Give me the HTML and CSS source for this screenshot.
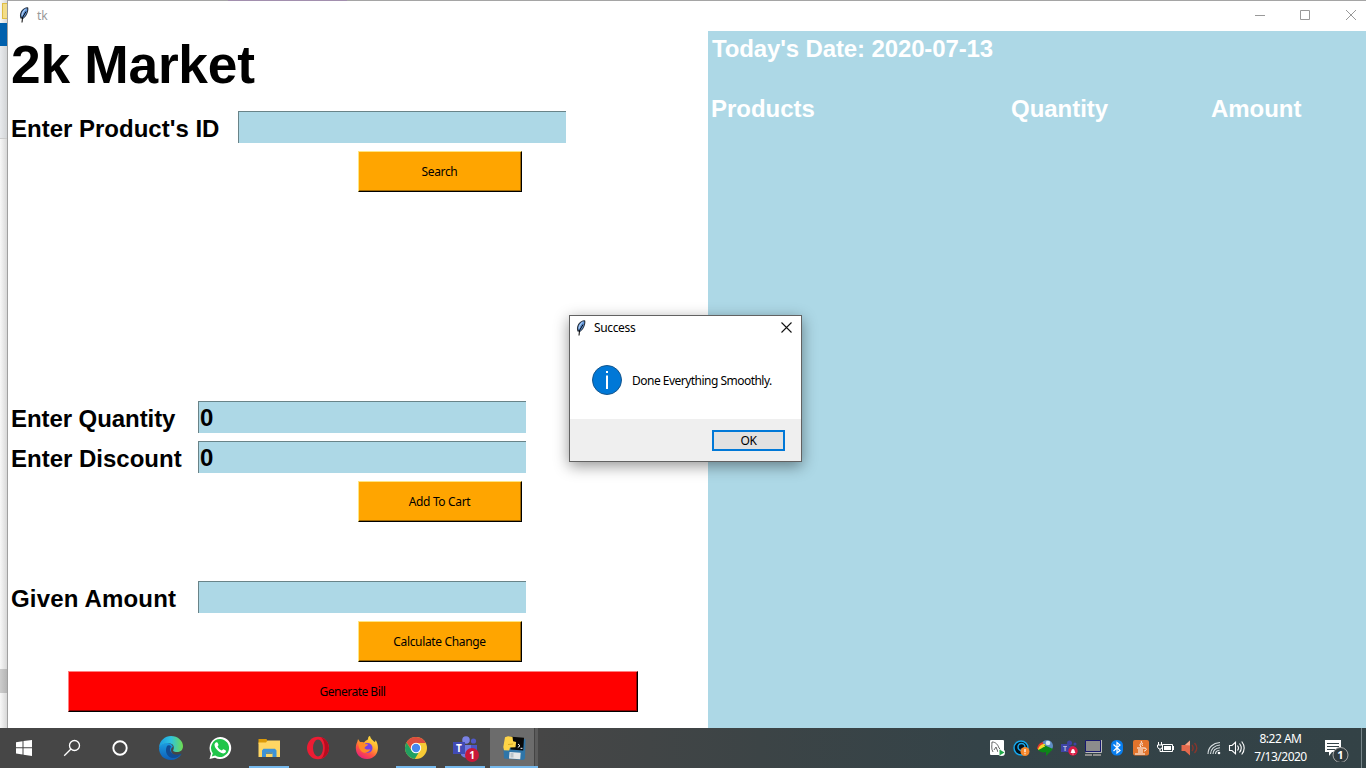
FILE: index.html
```html
<!DOCTYPE html>
<html lang="en">
<head>
<meta charset="utf-8">
<title>tk</title>
<link rel="stylesheet" href="styles.css">
</head>
<body>
<svg class="defs" aria-hidden="true">
  <defs>
    <symbol id="feather" viewBox="0 0 10 16">
      <path d="M1.500 11.500C0 7 2 3 5.300 1.200 7 0 9.500 0 9.300 1c.5 4-1.900 8.500-5 10.800z" fill="#28323f"/>
      <path d="M2.500 10C1.500 7 3.200 3.200 6 1.800c1.300-.8 2.300-.7 2.300.4C8 6 6.500 8.800 4.200 10.800z" fill="#6297dc"/>
      <path d="M3 8.500C3.300 6 4.500 3.600 6.600 2.200" stroke="#c4dcf8" fill="none"/>
      <path d="M3 15.500 3.500 10.500 7 4.500" stroke="#000" fill="none"/>
    </symbol>
  </defs>
</svg>
<div class="desktop">
  <div class="behind">
    <i class="behind-folder"></i><i class="behind-blue"></i><i class="behind-panel"></i><i class="behind-list"></i><i class="behind-thumb"></i><i class="behind-rest"></i>
  </div>
  <main class="window">
    <header class="titlebar">
      <svg class="feather"><use href="#feather"/></svg>
      <span class="titlebar-name">tk</span>
      <svg class="controls" width="102" height="12" viewBox="0 0 102 12" fill="none" stroke="#999"><path d="M0 6.500h10"/><path d="M45.500 1.500h9v9h-9zM91 1l10 10M101 1 91 11"/></svg>
    </header>
    <div class="content">
      <section class="form">
        <h1 class="heading">2k Market</h1>
        <div class="row"><label class="label label-wide">Enter Product's ID</label><div class="entry"></div></div>
        <div class="button">Search</div>
        <div class="row row-quantity"><label class="label">Enter Quantity</label><div class="entry">0</div></div>
        <div class="row row-discount"><label class="label discount">Enter Discount</label><div class="entry">0</div></div>
        <div class="button">Add To Cart</div>
        <div class="row row-amount"><label class="label label-amount">Given Amount</label><div class="entry"></div></div>
        <div class="button">Calculate Change</div>
        <div class="button button-bill">Generate Bill</div>
      </section>
      <section class="bill">
        <div class="date">Today's Date: 2020-07-13</div>
        <div class="columns"><span>Products</span><span>Quantity</span><span>Amount</span></div>
      </section>
    </div>
  </main>
</div>

<footer class="taskbar">
  <nav class="apps">
    <div class="app app-system"><svg class="icon" viewBox="0 0 24 24"><path fill="#fff" d="M4 6.200 10.500 5.200V11.300H4zM11.500 5.100 20 4v7.300h-8.500zM4 12.300h6.500v6.200L4 17.600zM11.500 12.300H20V20l-8.500-1.200z"/></svg></div>
    <div class="app app-system"><svg class="icon" viewBox="0 0 24 24" fill="none" stroke="#fff" stroke-width="1.300"><circle cx="14.500" cy="9.500" r="5"/><path d="M11 13 4.200 19.800"/></svg></div>
    <div class="app app-system"><svg class="icon" viewBox="0 0 24 24"><circle cx="12" cy="12" r="6.700" fill="none" stroke="#fff" stroke-width="1.900"/></svg></div>
    <div class="app app-first">
      <svg class="icon" viewBox="0 0 24 24">
        <defs>
          <linearGradient id="edge-top" x1="0" x2="1" y1=".3" y2=".3"><stop offset="0" stop-color="#1b9de2"/><stop offset=".5" stop-color="#2fc3df"/><stop offset="1" stop-color="#6fdd4e"/></linearGradient>
          <linearGradient id="edge-left" x1="0" x2="0" y1="0" y2="1"><stop offset="0" stop-color="#1b9ce0"/><stop offset="1" stop-color="#0d5eb8"/></linearGradient>
        </defs>
        <path fill="url(#edge-left)" d="M0 12C2 6 13 5 14 11c-3 1-3 7 3 8.500 2 .5 4-.5 5.500-1.500C20 22 16 24 12 24 5 24 0 19 0 12z"/>
        <path fill="url(#edge-top)" d="M0 11.500C.5 4.500 6 0 12 0c7 0 12 5 12 10 0 4.500-3 6-6 6-3.500 0-4.500-1.200-3.500-2.500C16.500 8 10 6 6 7.500 3 8.500 1 10 0 11.500z"/>
        <path fill="#114c94" d="M8 10c-3 6 1 12 6 12 4 0 7-2 8.500-4.500-4 2-9 1.500-11-2C10.500 13.500 11 12 12 10.800 11 9 9 9 8 10z"/>
      </svg>
    </div>
    <div class="app"><svg class="icon" viewBox="0 0 24 24"><path fill="#fff" d="M12 1a11 11 0 1 1-5 20.700L1.500 23 3 17.500A11 11 0 0 1 12 1z"/><path fill="#20c54a" d="M12 3a9 9 0 1 1-4.800 16.600l-3.400 1 1-3.300A9 9 0 0 1 12 3z"/><path fill="#fff" d="M8 6.500c1-.6 1.500-.3 2 1l.5 1.300c.2.700-.8 1.300-1 1.800.8 1.800 2.300 3.300 4.200 4 .7-.4 1.200-1.600 1.900-1.300l2.200 1.100c.7.600-.3 3-2.600 3C11 17 6.500 12 6.500 8.800c0-1 .7-2 1.500-2.300z"/></svg></div>
    <div class="app app-open"><svg class="icon" viewBox="0 0 24 24"><path fill="#dc9a08" d="M1.500 3h8l1 2v3h-9z"/><path fill="#ffd663" d="M1.500 6.500H9l1.500-2H23V21H1.500z"/><path fill="#3d93d8" d="M5 21v-6.500l1.500-1.700h11.500l1.500 1.700V21h-4v-4.500H9V21z"/><path fill="#1d6fb4" d="M9 16.500h6.500v1.200H9z"/></svg></div>
    <div class="app"><svg class="icon" viewBox="0 0 24 24"><ellipse cx="12" cy="12" rx="11" ry="11.300" fill="#ed1c33"/><path fill="#b70c20" d="M15 1.200A11.300 11.300 0 0 1 15 22.800c5-4 5-17.500 0-21.600z"/><ellipse cx="12" cy="12" rx="5" ry="8.500" fill="#484848"/></svg></div>
    <div class="app">
      <svg class="icon" viewBox="0 0 24 24">
        <defs><linearGradient id="fox" x1=".9" x2=".3" y1="0" y2="1"><stop offset="0" stop-color="#fff04a"/><stop offset=".4" stop-color="#ffb02e"/><stop offset=".7" stop-color="#ff5340"/><stop offset="1" stop-color="#e6217c"/></linearGradient></defs>
        <path fill="url(#fox)" d="M3 3l2 3 4 .500C11 4 13 4 13 3c0-2 1-3 2-3 .5 3 3 4 4.500 6 1-.5 1-1 1-2 5 7 2.500 19-8.500 19C3 23 0 16 1 9.500 1.500 7 2.500 6 3 3z"/>
        <circle cx="12.500" cy="12" r="5" fill="#7542e5"/>
        <path fill="#ff8a25" d="M3.500 7c3-2 5-.5 6 1l3.500.3c0 1.500-3 2-3.500 4 2 2 4 1 6 1-2 4-7 5-10 1-2-2.500-2-5-2-7.300z"/>
      </svg>
    </div>
    <div class="app app-open"><svg class="icon" viewBox="0 0 24 24"><circle cx="12" cy="12" r="11" fill="#f7ca35"/><path fill="#dc4d3e" d="M2.500 6.500A11 11 0 0 1 21.700 7H12a5 5 0 0 0-4.400 7z"/><path fill="#21a061" d="M2.500 6.500 7.700 14.500A5 5 0 0 0 15 16l-4.200 7A11 11 0 0 1 2.500 6.500z"/><circle cx="12" cy="12" r="5.200" fill="#fff"/><circle cx="12" cy="12" r="4.200" fill="#4688ed"/></svg></div>
    <div class="app app-open"><svg class="icon" viewBox="0 0 24 24"><circle cx="13" cy="4" r="3.800" fill="#7a82e6"/><circle cx="20.500" cy="5" r="2.600" fill="#5059c9"/><path fill="#7079df" d="M8 9h10v10a6 6 0 0 1-10 0z"/><path fill="#4c55c4" d="M18 9h6v7a4 4 0 0 1-6 3z"/><path fill="#414bb5" d="M0 6h12v12H0z"/><text class="glyph" x="3" y="15.500" font-size="10">T</text></svg><b class="badge">1</b></div>
    <div class="app app-open app-active"><svg class="icon" viewBox="0 0 24 24"><path fill="#2f75a8" d="M21 3l2.500.3L23 22.500 21.500 24 2 22.500 1.500 13z"/><path fill="#080808" d="M9.500 .7 22 1.700 21.200 14.600 8.500 13.600z"/><path fill="#e5e7e8" d="M7.500 16 18.700 16.700 18.200 23.200 7 22.500z"/><path fill="#b9c3ca" d="M8.500 17h3v4.500h-3z"/><path d="m16 8 2 1.800L15.800 11.500m2.700.8h2" stroke="#fff" fill="none"/><path fill="#ffd447" d="M3 1.200 6 .2 10.500 1l.6 4.300 3 .7-.6 5.200-5.500.3-.8 3L2 14.200 1.300 11z"/><path d="M6 8.500 11 8" stroke="#dca923" fill="none"/></svg></div>
  </nav>
  <div class="tray">
    <svg class="tray-icon" viewBox="0 0 24 24"><rect x="5" y="4" width="14" height="15" rx="1" fill="#fff"/><path d="M8 16c-2-3-1-7-1-10 4 0 6 3 7 6l3 3m-8-1 2-3 2 5" fill="none" stroke="#666"/><circle cx="16.500" cy="16.500" r="3.500" fill="#fff"/><path fill="#22a84a" d="m14.500 13.500 5 3-5 3z"/></svg>
    <svg class="tray-icon" viewBox="0 0 24 24"><circle cx="12" cy="12" r="7.500" fill="#06141d"/><g fill="none" stroke="#17a8ed" stroke-width="1.500"><circle cx="12" cy="12" r="7"/><circle cx="12.500" cy="11" r="3.500"/></g><circle cx="16" cy="15.500" r="4.500" fill="#f7882b"/><path d="M16 13v3.200m0 1v1" stroke="#fff" stroke-width="1.300"/></svg>
    <svg class="tray-icon" viewBox="0 0 24 24"><circle cx="14" cy="10" r="6" fill="#5f8dc4"/><circle cx="15" cy="7" r="2.300" fill="#d2e4f4"/><path fill="#e2372b" d="M4 13c1-5 3-6 6-7l1 8z"/><path fill="#f5d82d" d="M5 14c1-5 4-6 7-6l1 7z"/><path fill="#0c8617" d="M5 14c4-1 4-3 7-3l-1-2 9 4-7 7v-4c-3 1-6 0-8-2z"/></svg>
    <svg class="tray-icon" viewBox="0 0 24 24"><g fill="#3e44a5"><circle cx="12.500" cy="7" r="2.500"/><circle cx="18" cy="8" r="1.500"/><path d="M9 10h8v7h-5zM4 8h8v8H4z"/></g><text class="glyph" x="6" y="14.500" font-size="7" opacity=".6">T</text><circle cx="16" cy="15" r="4.700" fill="#d91e45"/><path fill="#fff" d="M13.500 17c1-1 .5-4 2.500-4s1.500 3 2.500 4zm2 .5h1v1h-1z"/></svg>
    <svg class="tray-icon" viewBox="0 0 24 24"><path fill="#8c8c8c" stroke="#171970" d="M4.500 4.500h15v11h-15z"/><path d="M4.500 16.500h16V4" fill="none" stroke="#bbb"/><path fill="#8c8c8c" d="M4 18h7v2H4zm8 0h8v2h-8z"/></svg>
    <svg class="tray-icon" viewBox="0 0 24 24"><rect x="6" y="4" width="12" height="15.500" rx="5.500" fill="#087eef"/><path d="m8.500 8.500 6.500 6-3 2.500V6.500l3 2.500-6.500 6" fill="none" stroke="#fff" stroke-width="1.200"/></svg>
    <svg class="tray-icon" viewBox="0 0 24 24"><rect x="4" y="4" width="16" height="15.500" rx="2" fill="#e3742c"/><path d="M12 5c2 2-3 3 0 6m2-4c-2 1-1 2 0 3M8 12h7c4 0 2 3 0 3M9 14h5m-5 2h5m-8 2h10" fill="none" stroke="#fff"/></svg>
    <svg class="tray-icon" viewBox="0 0 24 24"><path d="M9.500 8.500h10v7h-10zM5.500 6v3m3-3v3m-4 0h5v2l-1.500 2h-2l-1.500-2zm2.500 4v2.500h3" fill="none" stroke="#fff"/><path fill="#fff" d="M11 10h7v4h-7zm9 0h1v4h-1z"/></svg>
    <svg class="tray-icon" viewBox="0 0 24 24"><path fill="#e4694c" d="M4.500 9H8l5-4.500v15L8 15H4.500z"/><path fill="#f5a487" d="M8 9l5-4.500v5z"/><path d="M15 9c1.500 2 1.500 4 0 6m2.500-8c3 3 3 7 0 10" fill="none" stroke="#87352c" stroke-width="1.400"/></svg>
    <svg class="tray-icon" viewBox="0 0 24 24" fill="none" stroke="#d8dfe1" stroke-width="1.100"><path d="M7 18C7 11.500 12 7 19 6.500M9.500 18c0-5 4-8.500 9.500-9m-7 9c0-4 3-6 7-6.300M14.500 18c0-2 1.500-3.500 4-3.700"/><circle cx="18" cy="17" r="1.300" fill="#fff" stroke="none"/></svg>
    <svg class="tray-icon" viewBox="0 0 24 24" fill="none" stroke="#fff" stroke-width="1.100"><path d="M4.500 9.500H7l3.500-3.200v11.500L7 14.500H4.500zM12.500 9.500q2 2.500 0 5m2-7q3.500 4.500 0 9m2.200-11q5 6.500 0 13"/></svg>
  </div>
  <div class="clock"><span>8:22 AM</span><span>7/13/2020</span></div>
  <div class="notice"><svg width="26" height="26" viewBox="0 0 26 26"><path fill="#fff" d="M2 4h16v12H9l-3 4v-4H2z"/><path d="M4 7.500h12m-12 3h12m-12 3h9" stroke="#344348"/><circle cx="17.500" cy="19" r="7.500" fill="#303b3f" stroke="#aaa"/><text class="glyph" x="14.300" y="23" font-size="11">1</text></svg></div>
</footer>

<div class="dialog">
  <header class="dialog-title">
    <svg class="feather"><use href="#feather"/></svg>
    <span>Success</span>
    <svg class="dialog-close" width="11" height="11" viewBox="0 0 11 11"><path d="m.5.5 10 10m0-10-10 10" stroke="#111" stroke-width="1.100"/></svg>
  </header>
  <div class="dialog-body">
    <svg width="30" height="30" viewBox="0 0 30 30"><circle cx="15" cy="15" r="14.500" fill="#0078d7" stroke="#15558c"/><path fill="#fff" d="M14 6h2v2h-2zm0 4.500h2V24h-2z"/></svg>
    <span class="message">Done Everything Smoothly.</span>
  </div>
  <div class="dialog-footer"><div class="ok">OK</div></div>
</div>
</body>
</html>
```

FILE: styles.css
```css
* { box-sizing: border-box; }
body {
  margin: 0;
  width: 1366px;
  height: 768px;
  overflow: hidden;
  display: flex;
  flex-direction: column;
  font: 12px/16px "Noto Sans", sans-serif;
  letter-spacing: -.35px;
  color: #000;
  background: #fff;
}
.defs { position: absolute; width: 0; height: 0; }
svg { display: block; flex: none; }
.desktop { display: flex; height: 728px; }

.behind { width: 7px; display: flex; flex-direction: column; background: linear-gradient(90deg, #f8f8f8, #d8d8d8); }
.behind i { display: block; flex: none; }
.behind-folder { height: 16px; margin: 3px 0 4px 2px; background: #f3dd88; border: 1px solid #dfbd45; border-right: 0; }
.behind-blue { height: 23px; background: #0060ad; }
.behind-panel { height: 93px; background: linear-gradient(90deg, #e8eaed, #d2d4d6); border-bottom: 1px solid #ccc; }
.behind-list { height: 530px; }
.behind-thumb { height: 24px; background: linear-gradient(90deg, #cdcdcd, #b5b5b5); }

.window { flex: 1; display: flex; flex-direction: column; border-left: 1px solid #a0a0a0; background: #fff; }
.titlebar {
  height: 31px;
  flex: none;
  display: flex;
  align-items: center;
  padding: 0 9px 2px 11px;
  border-top: 1px solid;
  border-image: linear-gradient(90deg, #a5a5a5 221px, #a28fae 221px 340px, #a5a5a5 340px) 1;
}
.feather { width: 10px; height: 16px; }
.titlebar-name { margin: 1px 0 0 8px; color: #999; font-size: 12px; letter-spacing: 0; }
.controls { margin-left: auto; }
.content { flex: 1; display: flex; }
.form { width: 700px; display: flex; flex-direction: column; font-family: "Liberation Sans", Arial, sans-serif; letter-spacing: 0; }
.heading { height: 80px; margin: 0; padding-left: 3px; font-size: 53.3px; line-height: 67px; letter-spacing: -.25px; white-space: nowrap; }
.row { display: flex; height: 32px; flex: none; }
.label { width: 190px; padding: 4px 0 0 3px; font-size: 24px; font-weight: bold; line-height: 28px; white-space: nowrap; }
.label-wide { width: 230px; }
.label-amount { letter-spacing: .17px; }
.entry { width: 328px; padding-left: 1px; background: #add8e6; border: solid #698388; border-width: 1px 0 0 1px; font-size: 24px; font-weight: bold; line-height: 32px; }
.row-quantity { margin-top: 209px; }
.row-quantity .label { letter-spacing: -.07px; }
.row-discount { margin-top: 8px; }
.row-amount { margin-top: 59px; }
.button {
  width: 164px;
  height: 41px;
  flex: none;
  margin: 8px 0 0 350px;
  padding-right: 1px;
  display: flex;
  align-items: center;
  justify-content: center;
  font: 12px/16px "Noto Sans", sans-serif;
  letter-spacing: -.35px;
  background: #ffa500;
  border: 1px solid #ffe680;
  border-right-color: #000;
  border-bottom-color: #000;
  box-shadow: inset -1px -1px #a36900;
}
.button-bill { width: 570px; margin: 9px 0 0 60px; background: #f00; border-color: #ff8080 #000 #000 #ff8080; box-shadow: inset -1px -1px #990000; letter-spacing: -.5px; }

.bill { flex: 1; background: #add8e6; color: #fff; font: bold 24px/28px "Liberation Sans", Arial, sans-serif; letter-spacing: -.04px; padding: 4px 0 0 3px; }
.date { padding-left: 1px; letter-spacing: -.13px; }
.columns { display: grid; grid-template-columns: 300px 200px 1fr; margin-top: 32px; }

.taskbar { height: 40px; display: flex; align-items: center; color: #fff; background: linear-gradient(90deg, #464646 0 540px, #3c4446 760px, #344348 980px, #334246); }
.apps { display: flex; width: 985px; }
.app { position: relative; width: 49px; height: 40px; display: flex; align-items: center; justify-content: center; }
.app-system { width: 48px; }
.app-first { margin-left: 2px; }
.app-open::after { content: ""; position: absolute; left: 5px; right: 4px; bottom: 0; height: 2px; background: #76b9ed; }
.app-active { background: linear-gradient(90deg, transparent 1px, #6c6c6c 1px 45px, #444 45px 46px, #5b5b5b 46px); }
.app-active::after { left: 1px; right: 0; }
.icon { width: 24px; height: 24px; }
.badge { position: absolute; left: 25px; top: 20px; width: 14px; height: 14px; border-radius: 50%; background: #c9183a; font-size: 10px; line-height: 14px; text-align: center; }
.glyph { font-family: "Noto Sans", sans-serif; font-weight: bold; fill: #fff; }
.tray { display: flex; width: 264px; }
.tray-icon { width: 24px; height: 24px; }
.clock { width: 63px; display: flex; flex-direction: column; align-items: center; font-size: 12px; line-height: 18px; letter-spacing: -.5px; }
.notice { width: 50px; height: 40px; padding: 8px 0 0 11px; border-right: 1px solid #77858a; }

.dialog { position: absolute; left: 569px; top: 315px; width: 233px; height: 147px; display: flex; flex-direction: column; background: #fff; border: 1px solid #626262; box-shadow: 0 4px 14px rgba(0, 0, 0, .42); }
.dialog-title { height: 26px; display: flex; align-items: center; padding: 0 9px 3px 6px; }
.dialog-title span { margin: 1px 0 0 8px; }
.dialog-close { margin-left: auto; }
.dialog-body { flex: 1; display: flex; align-items: center; gap: 10px; padding: 0 0 1px 22px; white-space: nowrap; }
.message { padding-top: 1px; letter-spacing: -.52px; }
.dialog-footer { height: 42px; padding: 11px 16px 0 0; background: #efefef; }
.ok { width: 73px; height: 21px; margin-left: auto; border: 2px solid #0078d7; background: #e1e1e1; text-align: center; line-height: 18px; }
```
